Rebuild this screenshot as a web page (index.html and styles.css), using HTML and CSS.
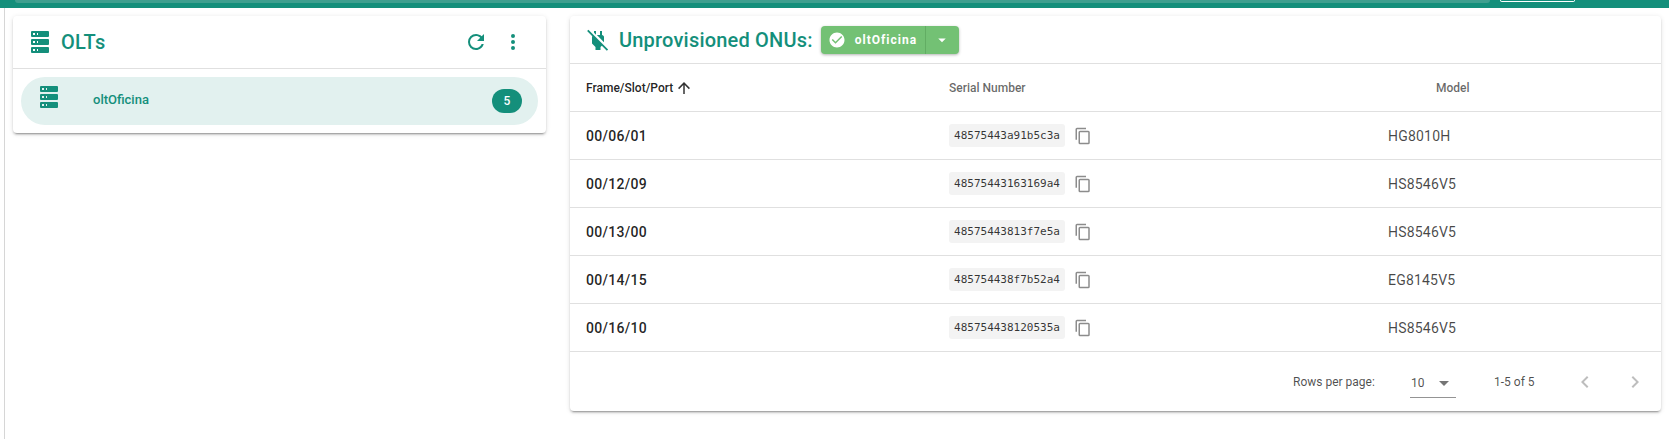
FILE: index.html
```html
<!DOCTYPE html>
<html lang="en">
<head>
<meta charset="utf-8">
<title>Unprovisioned ONUs</title>
<link rel="stylesheet" href="styles.css">
</head>
<body>
<svg class="sprite" aria-hidden="true">
  <symbol id="i-server" viewBox="0 0 24 24"><path d="M4,1H20A1,1 0 0,1 21,2V6A1,1 0 0,1 20,7H4A1,1 0 0,1 3,6V2A1,1 0 0,1 4,1M4,9H20A1,1 0 0,1 21,10V14A1,1 0 0,1 20,15H4A1,1 0 0,1 3,14V10A1,1 0 0,1 4,9M4,17H20A1,1 0 0,1 21,18V22A1,1 0 0,1 20,23H4A1,1 0 0,1 3,22V18A1,1 0 0,1 4,17M9,5H10V3H9V5M9,13H10V11H9V13M9,21H10V19H9V21M5,3V5H7V3H5M5,11V13H7V11H5M5,19V21H7V19H5Z"/></symbol>
  <symbol id="i-copy" viewBox="0 0 24 24"><path d="M19,21H8V7H19M19,5H8A2,2 0 0,0 6,7V21A2,2 0 0,0 8,23H19A2,2 0 0,0 21,21V7A2,2 0 0,0 19,5M16,1H4A2,2 0 0,0 2,3V17H4V3H16V1Z"/></symbol>
</svg>
<header class="topbar">
  <div class="search"></div>
  <div class="top-btn"></div>
</header>
<main class="page">
  <div class="rail"></div>
  <section class="card olts">
    <div class="olts-head">
      <svg class="ico ico-24"><use href="#i-server"/></svg>
      <h2 class="olts-title">OLTs</h2>
      <svg class="ico ico-24 act-refresh" viewBox="0 0 24 24"><path d="M17.65,6.35C16.2,4.9 14.21,4 12,4A8,8 0 0,0 4,12A8,8 0 0,0 12,20C15.73,20 18.84,17.45 19.73,14H17.65C16.83,16.33 14.61,18 12,18A6,6 0 0,1 6,12A6,6 0 0,1 12,6C13.66,6 15.14,6.69 16.22,7.78L13,11H20V4L17.65,6.35Z"/></svg>
      <svg class="ico ico-24 act-more" viewBox="0 0 24 24"><path d="M12,16A2,2 0 0,1 14,18A2,2 0 0,1 12,20A2,2 0 0,1 10,18A2,2 0 0,1 12,16M12,10A2,2 0 0,1 14,12A2,2 0 0,1 12,14A2,2 0 0,1 10,12A2,2 0 0,1 12,10M12,4A2,2 0 0,1 14,6A2,2 0 0,1 12,8A2,2 0 0,1 10,6A2,2 0 0,1 12,4Z"/></svg>
    </div>
    <div class="olt-list">
      <div class="olt-item">
        <svg class="ico ico-24 olt-icon"><use href="#i-server"/></svg>
        <span class="olt-name">oltOficina</span>
        <span class="olt-badge">5</span>
      </div>
    </div>
  </section>
  <section class="card onus">
    <div class="onus-head">
      <svg class="ico ico-24" viewBox="0 0 24 24"><path d="M22.11 21.46L2.39 1.73L1.11 3L6.27 8.16C6.1 8.5 6 8.84 6 9.22V15.5L9.5 19V22H14.5V19L15.84 17.73L20.84 22.73L22.11 21.46M18 14.5V9C18 8 17 7 16 7V3H14V7H10.84L18 14.17M10 3H8V4.83L10 6.83V3Z"/></svg>
      <h2 class="onus-title">Unprovisioned ONUs:</h2>
      <div class="split-btn">
        <span class="split-main">
          <svg class="ico-white" viewBox="0 0 24 24"><path d="M12 2C6.5 2 2 6.5 2 12S6.5 22 12 22 22 17.5 22 12 17.5 2 12 2M10 17L5 12L6.41 10.59L10 14.17L17.59 6.58L19 8L10 17Z"/></svg>
          oltOficina
        </span>
        <span class="split-arrow">
          <svg class="ico-white" viewBox="0 0 24 24"><path d="M7,10L12,15L17,10H7Z"/></svg>
        </span>
      </div>
    </div>
    <div class="table">
      <div class="row row-head">
        <div class="c1 sorted">Frame/Slot/Port
          <svg class="sort-ico" viewBox="0 0 24 24"><path d="M13,20H11V8L5.5,13.5L4.08,12.08L12,4.16L19.92,12.08L18.5,13.5L13,8V20Z"/></svg>
        </div>
        <div class="c2">Serial Number</div>
        <div class="c3 head-model">Model</div>
      </div>
      <div class="row">
        <div class="c1 port">00/06/01</div>
        <div class="c2"><code class="serial">48575443a91b5c3a</code><svg class="copy"><use href="#i-copy"/></svg></div>
        <div class="c3">HG8010H</div>
      </div>
      <div class="row">
        <div class="c1 port">00/12/09</div>
        <div class="c2"><code class="serial">48575443163169a4</code><svg class="copy"><use href="#i-copy"/></svg></div>
        <div class="c3">HS8546V5</div>
      </div>
      <div class="row">
        <div class="c1 port">00/13/00</div>
        <div class="c2"><code class="serial">48575443813f7e5a</code><svg class="copy"><use href="#i-copy"/></svg></div>
        <div class="c3">HS8546V5</div>
      </div>
      <div class="row">
        <div class="c1 port">00/14/15</div>
        <div class="c2"><code class="serial">485754438f7b52a4</code><svg class="copy"><use href="#i-copy"/></svg></div>
        <div class="c3">EG8145V5</div>
      </div>
      <div class="row">
        <div class="c1 port">00/16/10</div>
        <div class="c2"><code class="serial">485754438120535a</code><svg class="copy"><use href="#i-copy"/></svg></div>
        <div class="c3">HS8546V5</div>
      </div>
      <div class="pager">
        <span class="pager-label">Rows per page:</span>
        <span class="pager-select">10
          <svg class="pager-caret" viewBox="0 0 24 24"><path d="M7,10L12,15L17,10H7Z"/></svg>
        </span>
        <span class="pager-range">1-5 of 5</span>
        <svg class="pager-nav" viewBox="0 0 24 24"><path d="M15.41,16.58L10.83,12L15.41,7.41L14,6L8,12L14,18L15.41,16.58Z"/></svg>
        <svg class="pager-nav" viewBox="0 0 24 24"><path d="M8.59,16.58L13.17,12L8.59,7.41L10,6L16,12L10,18L8.59,16.58Z"/></svg>
      </div>
    </div>
  </section>
</main>
</body>
</html>
```
FILE: styles.css
```css
* { box-sizing: border-box; }
html, body { margin: 0; height: 100%; overflow: hidden; background: #fff; }
body { font-family: Roboto, "Liberation Sans", sans-serif; color: rgba(0,0,0,.87); }
.sprite { display: none; }

.topbar {
  height: 8px; background: #148f7b; display: flex; align-items: flex-end;
  padding-left: 15px;
}
.search { width: 1475px; height: 3px; margin-bottom: 5px; background: #3f9f8f; border-radius: 0 0 4px 4px; }
.top-btn { width: 75px; height: 2px; margin: 0 0 6px 10px; background: #148f7b; border: 1px solid #fff; border-top: 0; border-radius: 0 0 3px 3px; }

.page { display: flex; align-items: flex-start; height: 431px; }
.rail { width: 5px; height: 100%; border-right: 1px solid #d6d6d6; flex: none; }

.card {
  background: #fff; border-radius: 4px; flex: none;
  box-shadow: 0 3px 1px -2px rgba(0,0,0,.2), 0 2px 2px 0 rgba(0,0,0,.14), 0 1px 5px 0 rgba(0,0,0,.12);
}
.ico { fill: #148f7b; display: block; flex: none; }
.ico-24 { width: 24px; height: 24px; }

.olts { width: 533px; margin: 8px 0 0 8px; }
.olts-head { height: 53px; display: flex; align-items: center; padding: 0 21px 0 15px; border-bottom: 1px solid #e0e0e0; }
.olts-title { margin: 0 0 0 9px; font-size: 20px; font-weight: 500; letter-spacing: .2px; color: #148f7b; flex: 1; }
.act-refresh { margin-right: 13px; }
.olt-list { padding: 8px; }
.olt-item { height: 48px; border-radius: 24px; background: #e2f1ef; display: flex; align-items: center; padding: 0 16px 0 16px; }
.olt-icon { margin-top: -9px; }
.olt-name { margin-left: 32px; font-size: 13px; font-weight: 500; color: #148f7b; flex: 1; margin-top: -3px; }
.olt-badge { width: 30px; height: 24px; border-radius: 12px; background: #148f7b; color: #fff; font-size: 12px; font-weight: 500; display: flex; align-items: center; justify-content: center; }

.onus { width: 1091px; margin: 8px 0 0 24px; }
.onus-head { height: 48px; display: flex; align-items: center; padding: 0 0 0 16px; gap: 9px; border-bottom: 1px solid #e0e0e0; }
.onus-title { margin: 1px 0 0; font-size: 20px; font-weight: 500; letter-spacing: .2px; color: #148f7b; }
.split-btn { height: 28px; width: 138px; margin-left: -1px; display: flex; background: #73c174; border-radius: 4px; color: #fff; font-size: 12px; font-weight: 700; letter-spacing: 1px; box-shadow: 0 1px 3px rgba(0,0,0,.3); }
.split-main { flex: 1; display: flex; align-items: center; gap: 9px; padding-left: 7px; border-right: 1px solid #62ad63; }
.split-arrow { width: 33px; display: flex; align-items: center; justify-content: center; }
.ico-white { width: 18px; height: 18px; fill: #fff; flex: none; }

.row { display: grid; grid-template-columns: 363px 438px 1fr; height: 48px; align-items: center; border-bottom: 1px solid #e0e0e0; font-size: 14px; }
.row-head { font-size: 12px; font-weight: 500; color: rgba(0,0,0,.6); }
.c1 { padding-left: 16px; display: flex; align-items: center; }
.c2 { padding-left: 16px; display: flex; align-items: center; }
.c3 { padding-left: 17px; letter-spacing: .2px; color: rgba(0,0,0,.72); }
.head-model { padding-left: 65px; letter-spacing: 0; color: rgba(0,0,0,.6); }
.sorted { color: rgba(0,0,0,.87); gap: 2px; }
.sort-ico { width: 18px; height: 18px; fill: rgba(0,0,0,.8); }
.port { font-weight: 500; letter-spacing: .3px; }
.serial { width: 116px; height: 23px; background: #f3f3f3; border-radius: 3px; font-family: "DejaVu Sans Mono", "Liberation Mono", monospace; font-size: 11px; color: rgba(0,0,0,.8); display: flex; align-items: center; justify-content: center; }
.copy { width: 18px; height: 18px; margin-left: 9px; fill: rgba(0,0,0,.45); }

.pager { height: 59px; display: flex; align-items: center; font-size: 12px; color: rgba(0,0,0,.7); padding-left: 723px; }
.pager-label { width: 117px; flex: none; }
.pager-select { width: 46px; height: 29px; margin-top: 4px; flex: none; display: flex; align-items: center; justify-content: space-between; border-bottom: 1px solid rgba(0,0,0,.42); padding-left: 1px; }
.pager-caret { width: 24px; height: 24px; fill: rgba(0,0,0,.54); }
.pager-range { margin-left: 38px; width: 79px; flex: none; }
.pager-nav { width: 24px; height: 24px; fill: rgba(0,0,0,.26); margin-right: 26px; flex: none; }
```
